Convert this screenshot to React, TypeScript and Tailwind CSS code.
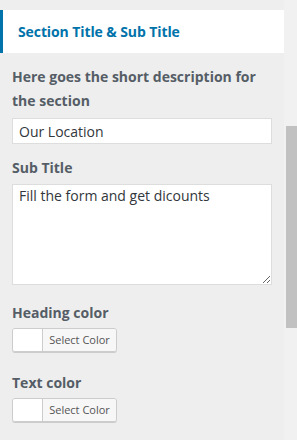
import React from 'react';

const font = { fontFamily: '"Open Sans", "Noto Sans", sans-serif' };

const ColorPicker: React.FC = () => (
  <div className="flex w-[105px] h-[24px] rounded-[3px] border border-[#cccccc] shadow-[0_1px_0_#cccccc] overflow-hidden">
    <div className="w-[30px] bg-white border-r border-[#cccccc]" />
    <div className="flex-1 flex items-center justify-center bg-[#f7f7f7] text-[11px] text-[#555555]">Select Color</div>
  </div>
);

export default function App() {
  return (
    <div className="flex w-[297px] h-[440px] bg-[#eeeeee] overflow-hidden" style={font}>
      <div className="w-[284px] flex flex-col">
        {/* Section header */}
        <div className="mt-[10px] h-[43px] bg-white border-l-[3px] border-[#0073aa] flex items-center pl-[15px]">
          <h3 className="text-[14px] font-bold text-[#0073aa] tracking-[-0.1px]">Section Title &amp; Sub Title</h3>
        </div>

        <div className="px-[12px] pt-[12px] flex flex-col">
          <label className="text-[14px] font-bold text-[#555d66] leading-[24px]">
            Here goes the short description for the section
          </label>
          <input
            className="mt-[5px] w-[260px] h-[26px] bg-white border border-[#dddddd] px-[6px] text-[14px] text-[#32373c] outline-none"
            defaultValue="Our Location"
          />

          <label className="mt-[12px] text-[14px] font-bold text-[#555d66] leading-[24px]">Sub Title</label>
          <textarea
            className="mt-[4px] w-[260px] h-[101px] bg-white border border-[#dddddd] px-[6px] py-0 text-[14px] text-[#32373c] outline-none"
            defaultValue="Fill the form and get dicounts"
          />

          <label className="mt-[16px] text-[14px] font-bold text-[#555d66] leading-[24px]">Heading color</label>
          <div className="mt-[3px]">
            <ColorPicker />
          </div>

          <label className="mt-[19px] text-[14px] font-bold text-[#555d66] leading-[24px]">Text color</label>
          <div className="mt-[3px]">
            <ColorPicker />
          </div>
        </div>
      </div>

      {/* Scrollbar */}
      <div className="flex-1 bg-[#f1f1f1] pl-[2px]">
        <div className="mt-[126px] h-[202px] bg-[#c1c1c1]" />
      </div>
    </div>
  );
}
